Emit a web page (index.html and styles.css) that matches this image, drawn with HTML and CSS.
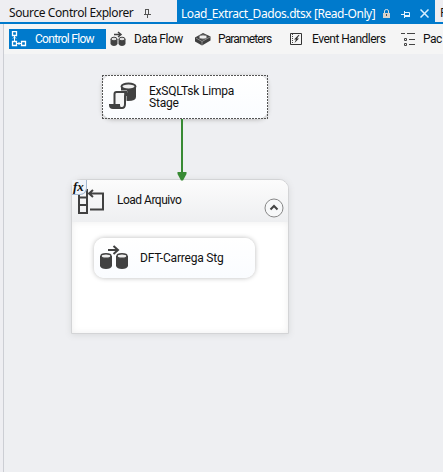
FILE: index.html
```
<!DOCTYPE html>
<html lang="en">
<head>
<meta charset="utf-8">
<title>Control Flow Designer</title>
<link rel="stylesheet" href="styles.css">
</head>
<body>
<header class="tabs">
  <div class="tab explorer"><span class="name">Source Control Explorer</span>
    <svg class="pin" width="9" height="9" viewBox="0 0 9 9"><path d="M2.500 0v5M2 .5h4M5.500 0v5M1 5.500h7M4.500 6v3" fill="none" stroke="#555"/></svg>
  </div>
  <div class="tab active"><span class="name">Load_Extract_Dados.dtsx [Read-Only]</span>
    <svg class="lock" width="7" height="9" viewBox="0 0 7 9"><path d="M1.500 4V2q0-1.500 2-1.500t2 1.500v2" fill="none" stroke="#ddd"/><path d="M0 4h7v5H0z" fill="#d8d3cb"/><path d="M3 5h1v2H3z" fill="#555"/></svg>
    <svg class="pin2" width="9" height="7" viewBox="0 0 9 7"><path d="M0 3.500h3M3.500 0v7M4 1.500h4.500v4M4 4.500h5M4 5.500h5" fill="none" stroke="#e4f3ff"/></svg>
    <svg class="close" width="9" height="9" viewBox="0 0 9 9"><path d="M.5.5l8 8M8.500.5l-8 8" fill="none" stroke="#d8efff" stroke-width="1.500"/></svg>
  </div>
  <div class="tab next"><span class="name">P</span></div>
</header>
<main class="designer">
  <nav class="toolbar">
    <div class="tool selected">
      <svg width="16" height="16" viewBox="0 0 16 16"><g fill="none" stroke="#fff"><path d="M1.500.5h4v4h-4zM1.500 10.500h4v4h-4zM10.500 10.500h4v4h-4z" stroke-width="1.300"/><path d="M3.500 5v5M6 12.500h4M2 7.500L3.500 6 5 7.500M7.500 11L9 12.500 7.500 14"/></g></svg>
      <span>Control Flow</span>
    </div>
    <div class="tool flow">
      <svg width="16" height="16" viewBox="0 0 16 16"><path d="M.5 8v5q1 2 3.500 2t3.500-2V8zM8.500 8v5q1 2 3.500 2t3.500-2V8z" fill="#414141"/><ellipse cx="4" cy="8" rx="3" ry="1.800" fill="#ddd" stroke="#414141"/><ellipse cx="12" cy="8" rx="3" ry="1.800" fill="#ddd" stroke="#414141"/><path d="M4 3.500h6M8 1l3 2.500L8 6" fill="none" stroke="#414141" stroke-width="1.500"/></svg>
      <span>Data Flow</span>
    </div>
    <div class="tool params">
      <svg width="16" height="14" viewBox="0 0 16 14"><path d="M0 5.500L8 1l7.500 3.500v4L7 13.500 0 9.500z" fill="#3f3f3f"/><path d="M1 6l6 3.500L15 5M7 9.500V13" fill="none" stroke="#aaa" stroke-width=".7"/><ellipse cx="8" cy="5" rx="4" ry="2" fill="#eee" stroke="#888"/></svg>
      <span>Parameters</span>
    </div>
    <div class="tool events">
      <svg width="12" height="12" viewBox="0 0 12 12"><path d="M.5.5h11v11H.5z" fill="#f5f5f5" stroke="#333"/><path d="M2.500 1v10" stroke="#444" stroke-dasharray="1 1"/><path d="M8.500 2L4 6.500h2L4.500 10 9 5.500H7L9.500 2z" fill="#333"/></svg>
      <span>Event Handlers</span>
    </div>
    <div class="tool package">
      <svg width="15" height="14" viewBox="0 0 15 14"><path d="M0 1.500h4M6 1.500h8M8 7.500h6M8 12.500h6" stroke="#444"/><path d="M3.500 6.500h2v2h-2zM3.500 11.500h2v2h-2z" fill="none" stroke="#444"/></svg>
      <span>Pac</span>
    </div>
  </nav>
  <section class="canvas">
    <article class="task sql">
      <svg class="sql-icon" width="29" height="28" viewBox="0 0 29 28"><path d="M12 4v11q2 4 7 4 8 0 8-4V4z" fill="#414141"/><ellipse cx="19.500" cy="4.500" rx="7" ry="3" fill="#eee" stroke="#414141" stroke-width="2"/><path d="M5 10h13q-2 1-2 4v9q0 4-3 4H3q-3 0-3-4h5z" fill="#fafafa" stroke="#fff" stroke-width="3"/><path d="M5.500 23V12q0-2 2-2H18q-2 1-2 4v8q0 4-3 4H4q-3 0-3-3h9q0 3 2 3" fill="#f5f5f5" stroke="#414141" stroke-width="2"/><path d="M15 10h2q3 0 3 4h-4M1 23h9v3H4q-3 0-3-3" fill="#414141"/></svg>
      <p><span>ExSQLTsk Limpa</span><span>Stage</span></p>
      <svg class="selection" width="166" height="44" viewBox="0 0 166 44"><path d="M0 .5h166M0 43.500h166M.5 0v44M165.500 0v44" stroke="#555" stroke-dasharray="2 1"/></svg>
    </article>
    <article class="container">
      <header>
        <svg class="loop-icon" width="28" height="26" viewBox="0 0 28 26"><path d="M1 1h8v23H1zM1 8.500h8M1 16h8M12 20.500h13v-16H12M15 1l-4 3.500L15 8" fill="none" stroke="#414141" stroke-width="2"/></svg>
        <p>Load Arquivo</p>
        <svg class="collapse" width="20" height="20" viewBox="0 0 20 20"><circle cx="10" cy="10" r="9" fill="#f7f8f9" stroke="#888"/><path d="M6.500 11.500L10 8l3.500 3.500" fill="none" stroke="#444" stroke-width="2"/></svg>
        <span class="fx">fx</span>
      </header>
      <div class="body">
        <div class="task data">
          <svg width="30" height="27" viewBox="0 0 30 27"><path d="M1 11v10q1 3 6 3t6-3V11zM17 11v10q1 3 6 3t6-3V11z" fill="#414141"/><ellipse cx="7" cy="11" rx="5" ry="2.300" fill="#eee" stroke="#414141" stroke-width="1.500"/><ellipse cx="23" cy="11" rx="5" ry="2.300" fill="#eee" stroke="#414141" stroke-width="1.500"/><path d="M9 5h10M14.500 1l4.500 4-4.500 4" fill="none" stroke="#414141" stroke-width="2"/></svg>
          <p>DFT-Carrega Stg</p>
        </div>
      </div>
    </article>
    <svg class="connector" width="10" height="62" viewBox="0 0 10 62"><path d="M4 0h2v53h3.500v2L6 61.500H4L.5 55v-2H4z" fill="#388a34"/></svg>
  </section>
</main>
</body>
</html>
```
FILE: styles.css
```
* { box-sizing: border-box; }
body { margin: 0; width: 443px; height: 472px; overflow: hidden; background: #eeeef2; color: #111; font: 12px/16px "Roboto", sans-serif; }
p { margin: 0; letter-spacing: -.2px; }
svg { display: block; flex: none; }
.tabs { display: flex; height: 24px; border-bottom: 2px solid #007acc; font: 12px/18px "Noto Sans", sans-serif; white-space: nowrap; overflow: hidden; }
.tab { display: flex; height: 24px; padding-top: 4px; flex: none; }
.explorer { width: 177px; padding-left: 9px; }
.explorer .name { width: 134px; letter-spacing: -.4px; }
.pin { margin-top: 5px; }
.active { width: 258px; padding: 5px 0 0 4px; background: #007acc; color: #fff; }
.active .name { width: 202px; letter-spacing: -.43px; }
.lock { margin-top: 4px; }
.pin2 { margin: 6px 0 0 11px; }
.close { margin: 4px 0 0 10px; }
.next { padding-left: 5px; }
.designer { height: 448px; margin-left: 3px; border-left: 1px solid #ccced4; }
.toolbar { display: flex; height: 30px; padding: 5px 0 0 5px; background: #f5f5f5; white-space: nowrap; overflow: hidden; }
.tool { display: flex; align-items: center; height: 20px; flex: none; letter-spacing: -.5px; }
.tool span { line-height: 20px; }
.selected { width: 97px; padding-left: 2px; gap: 8px; background: #007acc; color: #fff; letter-spacing: -.7px; }
.flow { width: 89px; padding-left: 4px; gap: 8px; }
.params { width: 95px; gap: 7px; letter-spacing: -.85px; }
.events { width: 111px; gap: 10px; }
.package { gap: 7px; }
.canvas { position: relative; height: 418px; background: #eeeff2; }
.task { display: flex; background: linear-gradient(#fff, #fafcff); border-radius: 10px; }
.sql { position: absolute; left: 98px; top: 21px; width: 166px; height: 44px; padding: 7px 0 0 7px; box-shadow: 0 1px 4px #bbb; }
.selection { position: absolute; inset: 0; }
.sql p { display: grid; grid-auto-rows: 12px; margin-left: 11px; line-height: 12px; padding-top: 3px; }
.connector { position: absolute; left: 173px; top: 65px; }
.container { position: absolute; left: 67px; top: 125px; width: 218px; height: 155px; border: 1px solid #d3d4d6; border-radius: 10px 10px 0 0; background: #fff; box-shadow: 0 1px 6px #d8d9db; }
.container header { position: relative; display: flex; height: 42px; padding: 9px 4px 0 6px; border-radius: 9px 9px 0 0; background: linear-gradient(#fcfcfc, #eeeff1); }
.container header p { margin-left: 11px; padding-top: 3px; flex: 1; letter-spacing: -.5px; }
.collapse { margin-top: 9px; }
.fx { position: absolute; left: 0; top: 0; width: 15px; height: 15px; background: #f0f4fa; border: solid #a4b8d0; border-width: 0 1px 1px 0; border-bottom-right-radius: 7px; font: italic bold 13px/13px "Liberation Serif", serif; padding-left: 1px; }
.body { height: 111px; padding: 16px 0 0 22px; box-shadow: inset 0 0 7px #eee; }
.data { width: 161px; height: 40px; padding: 7px 0 0 5px; box-shadow: 0 0 5px #bbb; }
.data p { margin-left: 11px; padding-top: 5px; }
```
